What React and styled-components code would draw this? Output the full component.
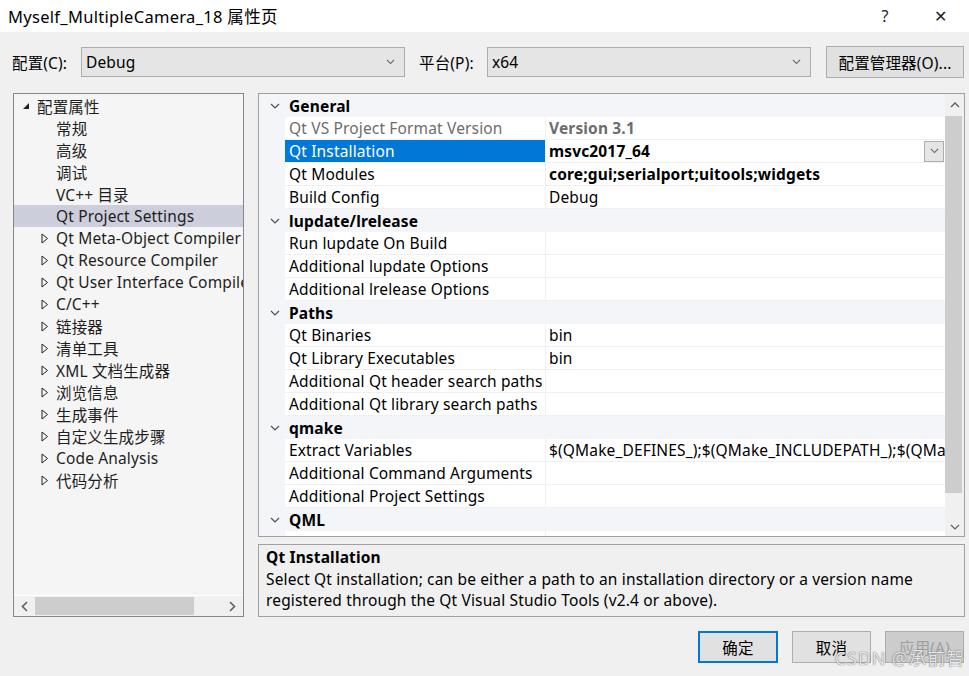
import React from 'react';
import styled, { createGlobalStyle } from 'styled-components';

const GlobalStyle = createGlobalStyle`
  html, body {
    margin: 0;
    padding: 0;
    background: #f0f0f0;
  }
  body {
    font-family: "Noto Sans", "Noto Sans CJK SC", sans-serif;
    font-size: 15.5px;
    letter-spacing: 0.15px;
    color: #000;
  }
`;

const Dialog = styled.div`
  position: relative;
  width: 969px;
  height: 676px;
  display: flex;
  flex-direction: column;
  background: #f0f0f0;
  overflow: hidden;
`;

const TitleBar = styled.div`
  height: 32px;
  display: flex;
  align-items: center;
  padding-left: 8px;
  background: #fff;
  font-size: 16.5px;
  letter-spacing: 0.3px;
`;

const TitleText = styled.span`
  flex: 1;
`;

const TitleButton = styled.span`
  width: 56px;
  text-align: center;
  font-size: 16px;
  color: #222;
`;

const ConfigBar = styled.div`
  display: flex;
  align-items: center;
  height: 32px;
  margin-top: 14px;
  padding: 0 5px 0 12px;
`;

const FieldLabel = styled.span`
  width: ${(p) => p.$width}px;
  flex: none;
  white-space: nowrap;
`;

const Combo = styled.div`
  width: ${(p) => p.$width}px;
  height: 30px;
  box-sizing: border-box;
  border: 1px solid #adadad;
  background: #e5e5e5;
  display: flex;
  align-items: center;
  padding: 0 9px 0 4px;
  margin-right: ${(p) => p.$gap}px;
`;

const ComboText = styled.span`
  flex: 1;
`;

const Button = styled.div`
  width: ${(p) => p.$width || 78}px;
  height: 32px;
  box-sizing: border-box;
  display: flex;
  align-items: center;
  justify-content: center;
  border: ${(p) => (p.$primary ? '2px solid #0078d7' : '1px solid #adadad')};
  background: ${(p) => (p.$disabled ? '#cccccc' : '#e1e1e1')};
  color: ${(p) => (p.$disabled ? '#a0a0a0' : '#000')};
  margin-left: ${(p) => (p.$push ? 'auto' : '0')};
  white-space: nowrap;
`;

const Main = styled.div`
  display: flex;
  margin-top: 15px;
  height: 524px;
  padding-left: 13px;
`;

const TreePanel = styled.div`
  width: 231px;
  box-sizing: border-box;
  border: 1px solid #828790;
  background: #f5f5f5;
  display: flex;
  flex-direction: column;
`;

const TreeList = styled.div`
  flex: 1;
  padding-top: 1px;
  overflow: hidden;
`;

const TreeRow = styled.div`
  height: 22px;
  display: flex;
  align-items: center;
  padding-left: ${(p) => (p.$level === 0 ? 8 : 27)}px;
  background: ${(p) => (p.$selected ? '#cccedb' : 'transparent')};
  color: #1e1e1e;
  white-space: nowrap;
`;

const Expander = styled.span`
  width: 15px;
  flex: none;
  display: flex;
  align-items: center;
`;

const HScroll = styled.div`
  height: 20px;
  display: flex;
  align-items: center;
  border-top: 1px solid #fff;
  background: #f0f0f0;
`;

const HThumb = styled.div`
  flex: 1;
  height: 18px;
  margin: 0 28px 0 0;
  background: #cdcdcd;
`;

const ScrollArrow = styled.span`
  width: 21px;
  height: 20px;
  flex: none;
  display: flex;
  align-items: center;
  justify-content: center;
`;

const RightColumn = styled.div`
  margin-left: 14px;
  width: 707px;
  display: flex;
  flex-direction: column;
`;

const Grid = styled.div`
  height: 444px;
  box-sizing: border-box;
  border: 1px solid #a0a0a0;
  background: #fff;
  display: flex;
  overflow: hidden;
`;

const GridBody = styled.div`
  flex: 1;
  min-width: 0;
  overflow: hidden;
`;

const CategoryRow = styled.div`
  height: 23px;
  display: flex;
  align-items: center;
  background: #f3f5f9;
  font-weight: 700;
`;

const Chevron = styled.span`
  width: 29px;
  flex: none;
  display: flex;
  justify-content: center;
  padding-left: 1px;
`;

const PropRow = styled.div`
  height: 23px;
  display: flex;
`;

const Gutter = styled.div`
  width: 26px;
  flex: none;
  background: #f3f5f9;
`;

const NameCell = styled.div`
  width: 261px;
  flex: none;
  box-sizing: border-box;
  padding-left: 4px;
  display: flex;
  align-items: center;
  border-right: 1px solid #f0f0f0;
  border-bottom: 1px solid #f0f0f0;
  background: ${(p) => (p.$selected ? '#0078d7' : '#fff')};
  color: ${(p) => (p.$selected ? '#fff' : p.$readonly ? '#6d6d6d' : '#000')};
  white-space: nowrap;
  overflow: hidden;
`;

const ValueCell = styled.div`
  flex: 1;
  min-width: 0;
  box-sizing: border-box;
  padding-left: 3px;
  display: flex;
  align-items: center;
  border-bottom: 1px solid #f0f0f0;
  font-weight: ${(p) => (p.$bold ? 700 : 400)};
  color: ${(p) => (p.$readonly ? '#6d6d6d' : '#000')};
  white-space: nowrap;
  overflow: hidden;
`;

const ValueText = styled.span`
  flex: 1;
  overflow: hidden;
`;

const DropButton = styled.span`
  width: 20px;
  height: 21px;
  flex: none;
  box-sizing: border-box;
  border: 1px solid #adadad;
  background: #e5e5e5;
  display: flex;
  align-items: center;
  justify-content: center;
  margin-right: 1px;
`;

const VScroll = styled.div`
  width: 19px;
  flex: none;
  display: flex;
  flex-direction: column;
  background: #f0f0f0;
`;

const VThumb = styled.div`
  height: 382px;
  margin: 0 2px 0 0;
  background: #cdcdcd;
`;

const VArrow = styled.span`
  height: ${(p) => p.$h}px;
  display: flex;
  align-items: ${(p) => (p.$bottom ? 'flex-end' : 'center')};
  justify-content: center;
  padding-bottom: ${(p) => (p.$bottom ? 6 : 0)}px;
`;

const Description = styled.div`
  margin-top: 7px;
  height: 73px;
  box-sizing: border-box;
  border: 1px solid #a0a0a0;
  padding: 2px 7px;
  line-height: 21.5px;
`;

const DescTitle = styled.div`
  font-weight: 700;
`;

const Footer = styled.div`
  display: flex;
  justify-content: flex-end;
  gap: 14px;
  padding: 14px 5px 0 0;
`;

const Watermark = styled.div`
  position: absolute;
  right: 4px;
  bottom: 6px;
  font-size: 18px;
  color: rgba(255, 255, 255, 0.85);
  text-shadow: 0 0 1px rgba(60, 60, 60, 0.7), 0 0 1px rgba(60, 60, 60, 0.5);
  letter-spacing: 0.8px;
  pointer-events: none;
`;

const ChevronDown = ({ color = '#606060', w = 10 }) => (
  <svg width={w} height={w / 2 + 1} viewBox="0 0 10 6">
    <path d="M1 1 L5 5 L9 1" fill="none" stroke={color} strokeWidth="1.2" />
  </svg>
);

const ChevronUp = () => (
  <svg width="10" height="6" viewBox="0 0 10 6">
    <path d="M1 5 L5 1 L9 5" fill="none" stroke="#606060" strokeWidth="1.4" />
  </svg>
);

const ChevronSide = ({ dir }) => (
  <svg width="7" height="11" viewBox="0 0 7 11">
    <path
      d={dir === 'left' ? 'M6 1 L1.5 5.5 L6 10' : 'M1 1 L5.5 5.5 L1 10'}
      fill="none"
      stroke="#606060"
      strokeWidth="1.6"
    />
  </svg>
);

const OpenTriangle = () => (
  <svg width="8" height="8" viewBox="0 0 8 8">
    <path d="M7 1 L7 7 L1 7 Z" fill="#222" />
  </svg>
);

const ClosedTriangle = () => (
  <svg width="8" height="11" viewBox="0 0 8 11">
    <path d="M1 1 L6.5 5.5 L1 10 Z" fill="none" stroke="#222" strokeWidth="1" />
  </svg>
);

const treeItems = [
  { label: '配置属性', level: 0, open: true },
  { label: '常规', level: 1 },
  { label: '高级', level: 1 },
  { label: '调试', level: 1 },
  { label: 'VC++ 目录', level: 1 },
  { label: 'Qt Project Settings', level: 1, selected: true },
  { label: 'Qt Meta-Object Compiler', level: 1, child: true },
  { label: 'Qt Resource Compiler', level: 1, child: true },
  { label: 'Qt User Interface Compiler', level: 1, child: true },
  { label: 'C/C++', level: 1, child: true },
  { label: '链接器', level: 1, child: true },
  { label: '清单工具', level: 1, child: true },
  { label: 'XML 文档生成器', level: 1, child: true },
  { label: '浏览信息', level: 1, child: true },
  { label: '生成事件', level: 1, child: true },
  { label: '自定义生成步骤', level: 1, child: true },
  { label: 'Code Analysis', level: 1, child: true },
  { label: '代码分析', level: 1, child: true },
];

const categories = [
  {
    name: 'General',
    rows: [
      { name: 'Qt VS Project Format Version', value: 'Version 3.1', bold: true, readonly: true },
      { name: 'Qt Installation', value: 'msvc2017_64', bold: true, selected: true, dropdown: true },
      { name: 'Qt Modules', value: 'core;gui;serialport;uitools;widgets', bold: true },
      { name: 'Build Config', value: 'Debug' },
    ],
  },
  {
    name: 'lupdate/lrelease',
    rows: [
      { name: 'Run lupdate On Build' },
      { name: 'Additional lupdate Options' },
      { name: 'Additional lrelease Options' },
    ],
  },
  {
    name: 'Paths',
    rows: [
      { name: 'Qt Binaries', value: 'bin' },
      { name: 'Qt Library Executables', value: 'bin' },
      { name: 'Additional Qt header search paths' },
      { name: 'Additional Qt library search paths' },
    ],
  },
  {
    name: 'qmake',
    rows: [
      { name: 'Extract Variables', value: '$(QMake_DEFINES_);$(QMake_INCLUDEPATH_);$(QMake_LIBS_)' },
      { name: 'Additional Command Arguments' },
      { name: 'Additional Project Settings' },
    ],
  },
  {
    name: 'QML',
    rows: [{ name: 'Enable QML Debugging', value: 'true' }],
  },
];

export default function App() {
  return (
    <Dialog>
      <GlobalStyle />
      <TitleBar>
        <TitleText>Myself_MultipleCamera_18 属性页</TitleText>
        <TitleButton>?</TitleButton>
        <TitleButton>✕</TitleButton>
      </TitleBar>

      <ConfigBar>
        <FieldLabel $width={69}>配置(C):</FieldLabel>
        <Combo $width={324} $gap={14}>
          <ComboText>Debug</ComboText>
          <ChevronDown w={9} />
        </Combo>
        <FieldLabel $width={68}>平台(P):</FieldLabel>
        <Combo $width={324} $gap={0}>
          <ComboText>x64</ComboText>
          <ChevronDown w={9} />
        </Combo>
        <Button $push $width={138}>配置管理器(O)...</Button>
      </ConfigBar>

      <Main>
        <TreePanel>
          <TreeList>
            {treeItems.map((item) => (
              <TreeRow key={item.label} $level={item.level} $selected={item.selected}>
                <Expander>
                  {item.open && <OpenTriangle />}
                  {item.child && <ClosedTriangle />}
                </Expander>
                {item.label}
              </TreeRow>
            ))}
          </TreeList>
          <HScroll>
            <ScrollArrow>
              <ChevronSide dir="left" />
            </ScrollArrow>
            <HThumb />
            <ScrollArrow>
              <ChevronSide dir="right" />
            </ScrollArrow>
          </HScroll>
        </TreePanel>

        <RightColumn>
          <Grid>
            <GridBody>
              {categories.map((cat) => (
                <React.Fragment key={cat.name}>
                  <CategoryRow>
                    <Chevron>
                      <ChevronDown color="#505050" w={10} />
                    </Chevron>
                    {cat.name}
                  </CategoryRow>
                  {cat.rows.map((row) => (
                    <PropRow key={row.name}>
                      <Gutter />
                      <NameCell $selected={row.selected} $readonly={row.readonly}>
                        {row.name}
                      </NameCell>
                      <ValueCell $bold={row.bold} $readonly={row.readonly}>
                        <ValueText>{row.value}</ValueText>
                        {row.dropdown && (
                          <DropButton>
                            <ChevronDown w={9} />
                          </DropButton>
                        )}
                      </ValueCell>
                    </PropRow>
                  ))}
                </React.Fragment>
              ))}
            </GridBody>
            <VScroll>
              <VArrow $h={22}>
                <ChevronUp />
              </VArrow>
              <VThumb />
              <VArrow $h={38} $bottom>
                <ChevronDown w={10} />
              </VArrow>
            </VScroll>
          </Grid>

          <Description>
            <DescTitle>Qt Installation</DescTitle>
            <div>
              Select Qt installation; can be either a path to an installation directory or a version name
              registered through the Qt Visual Studio Tools (v2.4 or above).
            </div>
          </Description>
        </RightColumn>
      </Main>

      <Footer>
        <Button $primary $width={80}>确定</Button>
        <Button $width={79}>取消</Button>
        <Button $disabled $width={79}>应用(A)</Button>
      </Footer>

      <Watermark>CSDN @承前智</Watermark>
    </Dialog>
  );
}
